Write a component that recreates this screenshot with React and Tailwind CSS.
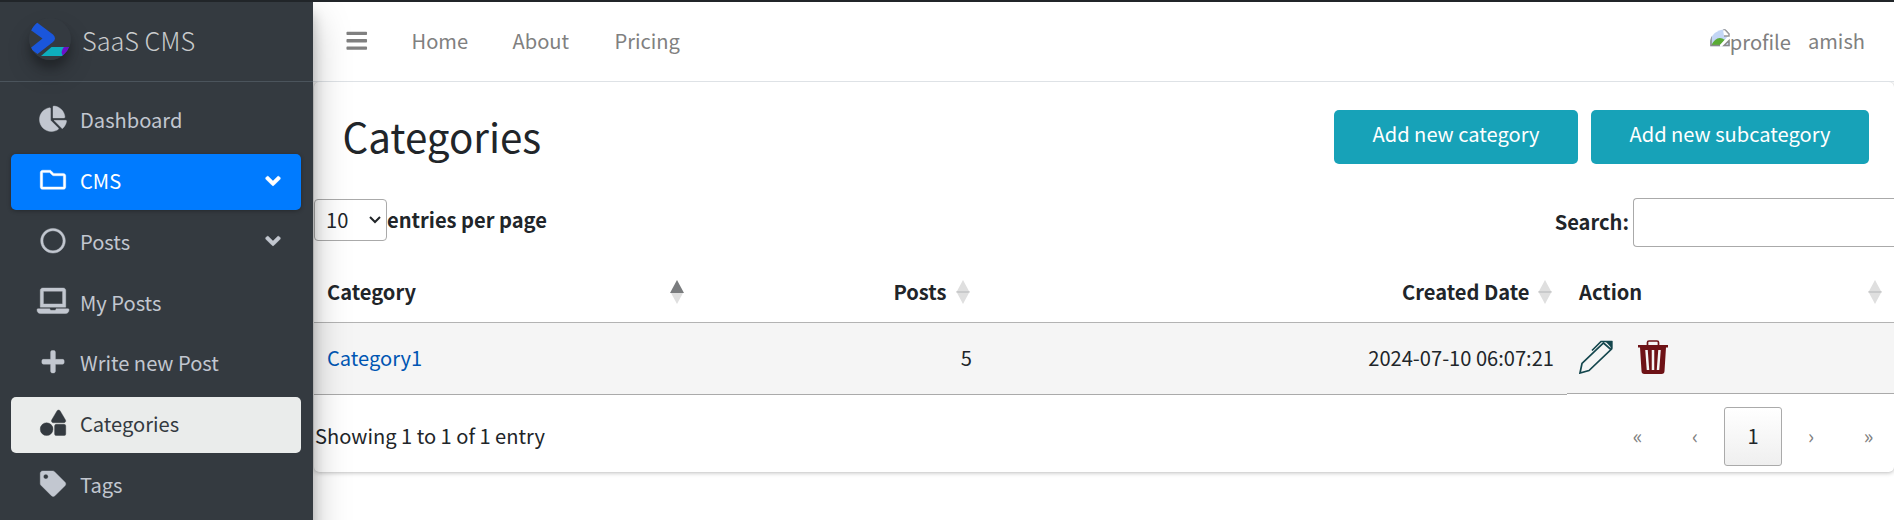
import React from "react";
import { FaChartPie, FaRegFolder, FaRegCircle, FaLaptop, FaPlus, FaShapes, FaTag, FaAngleDown, FaBars } from "react-icons/fa";

const nav = [
  { label: "Dashboard", Icon: FaChartPie },
  { label: "CMS", Icon: FaRegFolder, arrow: true, state: "primary" },
  { label: "Posts", Icon: FaRegCircle, arrow: true },
  { label: "My Posts", Icon: FaLaptop },
  { label: "Write new Post", Icon: FaPlus },
  { label: "Categories", Icon: FaShapes, state: "light" },
  { label: "Tags", Icon: FaTag },
];

const tone = {
  primary: "bg-[#007bff] text-white shadow-[0_1px_4px_rgba(0,0,0,0.3)]",
  light: "bg-[#eaeceb] text-[#343a40]",
  none: "text-[#c2c7d0]",
};

function Logo() {
  return (
    <svg viewBox="0 0 42 42" className="h-[42px] w-[42px] rounded-full shadow-[0_13px_25px_rgba(0,0,0,0.19),0_8px_8px_rgba(0,0,0,0.23)]">
      <clipPath id="round"><circle cx="21" cy="21" r="21" /></clipPath>
      <g clipPath="url(#round)">
        <rect width="42" height="42" fill="#343a40" />
        <path d="M8 4.500 24 16.500q4 4 0 7.500L8.500 36 1 30.500 13.500 20.500 1 11.500Z" fill="#1a56db" />
        <path d="M22.500 29H37l-3 9H12Z" fill="#0eaebd" />
        <path d="M35 29h7v9h-8q-3-4.500 1-9Z" fill="#6a11cb" />
      </g>
    </svg>
  );
}

function Sort({ asc, className = "" }) {
  return (
    <svg viewBox="0 0 14 24" className={"h-[24px] w-[14px] shrink-0 " + className}>
      <path d="M7 0 14 13H0Z" fill={asc ? "#7a7c7e" : "#dfdfdf"} />
      <path d={asc ? "M1 13h12L7 24Z" : "M0 11h14L7 24Z"} fill="#dfdfdf" />
      {!asc && <path d="M0.500 11h13l-1 2h-11Z" fill="#c9cacb" />}
    </svg>
  );
}

function BrokenImage() {
  return (
    <svg viewBox="0 0 20 20" className="mb-[7px] h-[20px] w-[20px]">
      <clipPath id="pic"><path d="M0 20V13Q2 3 15 1L20 4V20Z" /></clipPath>
      <g clipPath="url(#pic)">
        <path d="M0 0H14L20 6V20H0Z" fill="#c3d6f5" />
        <path d="M1 17.500Q7 6 15 12L10 17.500Z" fill="#5aab35" />
        <path d="M20 6 9 18h5l6-6Z" fill="#fff" />
        <path d="M0 18.300H20V20H0Z" fill="#fff" />
        <path d="M13 1.500h2L19 6v2h-5" fill="#fff" stroke="#999" strokeWidth="1.500" />
        <path d="M1 8v9.500H10M14 17.500l5-5v5Z" fill="none" stroke="#8a8a8a" strokeWidth="1.500" />
      </g>
    </svg>
  );
}

function Pencil() {
  return (
    <svg viewBox="0 0 34 34" className="h-[34px] w-[34px]" fill="none" stroke="#14464d" strokeWidth="1.700">
      <path d="M1 33 3 23.500 24.500 3 32 9.500 10 30.500Z" />
      <path d="M13 10.500 22 1.500h10.500v8" />
      <path d="M26 1h7.500v8Z" fill="#14464d" stroke="none" />
    </svg>
  );
}

function Trash() {
  return (
    <svg viewBox="0 0 30 34" className="h-[34px] w-[30px]">
      <path d="M9.500 6V2.500Q9.500 1 11 1h8q1.500 0 1.500 1.500V6" fill="none" stroke="#6e1216" strokeWidth="1.700" />
      <path d="M0 5h30v2.500h-2L26.500 31q0 3-3 3h-17q-3 0-3-3L2 7.500H0Z" fill="#6e1216" />
      <path d="M8.500 10 10 30M15 10v20M21.500 10 20 30" stroke="#f5f5f5" strokeWidth="2.500" />
    </svg>
  );
}

export default function App() {
  return (
    <div className="flex h-[520px] w-[1894px] flex-col overflow-hidden bg-white font-['Noto_Sans_CJK_SC','Noto_Sans',sans-serif] text-[20.1px] leading-[30px] text-[#212529]">
      <div className="h-[2px] shrink-0 bg-[#212529]" />
      <div className="flex h-[518px] overflow-hidden">
        <aside className="z-10 h-[620px] w-[313px] shrink-0 bg-[#343a40] shadow-[0_18px_35px_rgba(0,0,0,0.25),0_12px_12px_rgba(0,0,0,0.22)]">
          <div className="flex h-[80px] items-center border-b border-[#4b545c] pl-[29px]">
            <div className="mb-[5px]"><Logo /></div>
            <span className="mb-[3px] ml-[11px] text-[25.3px] font-light leading-[30px] text-[#c9cbcc]">SaaS CMS</span>
          </div>
          <nav className="flex flex-col gap-[4.75px] pt-[11.250px]">
            {nav.map(({ label, Icon, arrow, state }) => (
              <div key={label} className={"ml-[11px] flex h-[56px] w-[290px] items-center rounded-[5px] " + tone[state || "none"]}>
                <Icon className="mb-[5px] ml-[26px] h-[25.500px] w-[32px] overflow-visible stroke-[8]" />
                <span className="mb-[2px] ml-[11px] flex-1">{label}</span>
                {arrow && <FaAngleDown className="mb-[3px] mr-[16.500px] h-[24px] w-[24px] stroke-[8]" />}
              </div>
            ))}
          </nav>
        </aside>
        <main className="flex min-w-0 flex-1 flex-col">
          <header className="relative flex h-[80px] shrink-0 items-center border-b border-[#dee2e6] bg-white pr-[29px] text-[#808080]">
            <FaBars className="mb-[2px] ml-[32px] h-[23.500px] w-[23.500px]" />
            <span className="mb-[2px] ml-[43px] w-[101px]">Home</span>
            <span className="mb-[2px] w-[102px]">About</span>
            <span className="mb-[2px] flex-1">Pricing</span>
            <BrokenImage />
            <span>profile</span>
            <span className="mb-[2px] ml-[17px]">amish</span>
          </header>
          <section className="ml-px flex h-[390px] shrink-0 flex-col rounded-[5px] bg-white shadow-[0_0_1px_rgba(0,0,0,0.125),0_1px_4px_rgba(0,0,0,0.25)]">
            <div className="flex h-[116px] shrink-0 items-start pr-[25px] pt-[28px]">
              <h1 className="-mt-px ml-[28.500px] flex-1 text-[40.3px] leading-[54px]">Categories</h1>
              <button className="h-[54px] w-[244px] rounded-[5px] bg-[#17a2b8] pb-[6px] text-white">Add new category</button>
              <button className="ml-[13px] h-[54px] w-[278px] rounded-[5px] bg-[#17a2b8] pb-[6px] text-white">Add new subcategory</button>
            </div>
            <div className="flex h-[49px] shrink-0 items-center justify-between font-bold">
              <div className="mb-[5px] flex items-center">
                <div className="flex h-[42px] w-[73px] items-center justify-between rounded-[4px] border border-[#aaa] pl-[11px] pr-[5px] font-normal">
                  10
                  <svg viewBox="0 0 12 8" className="h-[8px] w-[12px]" fill="none" stroke="currentColor" strokeWidth="2"><path d="m1 1 5 5 5-5" /></svg>
                </div>
                <span>entries per page</span>
              </div>
              <div className="flex items-center">
                <span className="mb-[1px]">Search:</span>
                <div className="ml-[4px] h-[49px] w-[261px] rounded-l-[4px] border border-r-0 border-[#aaa]" />
              </div>
            </div>
            <div className="flex h-[76px] shrink-0 items-center border-b border-[#b3b3b3] pt-[15px] font-bold">
              <div className="flex w-[370px] items-center justify-between pl-[13px]"><span>Category</span><Sort asc /></div>
              <div className="flex w-[285.500px] items-center justify-end gap-[9px]"><span>Posts</span><Sort /></div>
              <div className="flex w-[582px] items-center justify-end gap-[8px]"><span>Created Date</span><Sort /></div>
              <div className="flex flex-1 items-center justify-between pl-[27.500px] pr-[12px]"><span>Action</span><Sort /></div>
            </div>
            <div className="flex h-[72px] shrink-0 items-start">
              <div className="flex h-[72px] w-[1253px] items-center border-b border-[#aaa] bg-[#f5f5f5] pb-[2px]">
                <span className="w-[370px] pl-[13px] text-[#0056b3]">Category1</span>
                <span className="w-[288px] text-right">5</span>
                <span className="w-[582px] text-right">2024-07-10 06:07:21</span>
              </div>
              <div className="flex h-[71px] flex-1 items-center gap-[25px] border-b border-[#aaa] bg-[#f5f5f5] pb-[2px] pl-[12px]">
                <Pencil />
                <Trash />
              </div>
            </div>
            <div className="flex flex-1 items-center">
              <span className="flex-1 pl-px pt-[4px]">Showing 1 to 1 of 1 entry</span>
              <div className="flex items-center pt-[5px] text-center text-[#808080]">
                <span className="w-[57px]">«</span>
                <span className="w-[58px]">‹</span>
                <span className="flex h-[59px] w-[58px] items-center justify-center rounded-[3px] border border-[#aaa] bg-linear-to-b from-white to-[#efefef] text-[#212529]">1</span>
                <span className="w-[58px]">›</span>
                <span className="mr-[-3px] w-[57px]">»</span>
              </div>
            </div>
          </section>
        </main>
      </div>
    </div>
  );
}
